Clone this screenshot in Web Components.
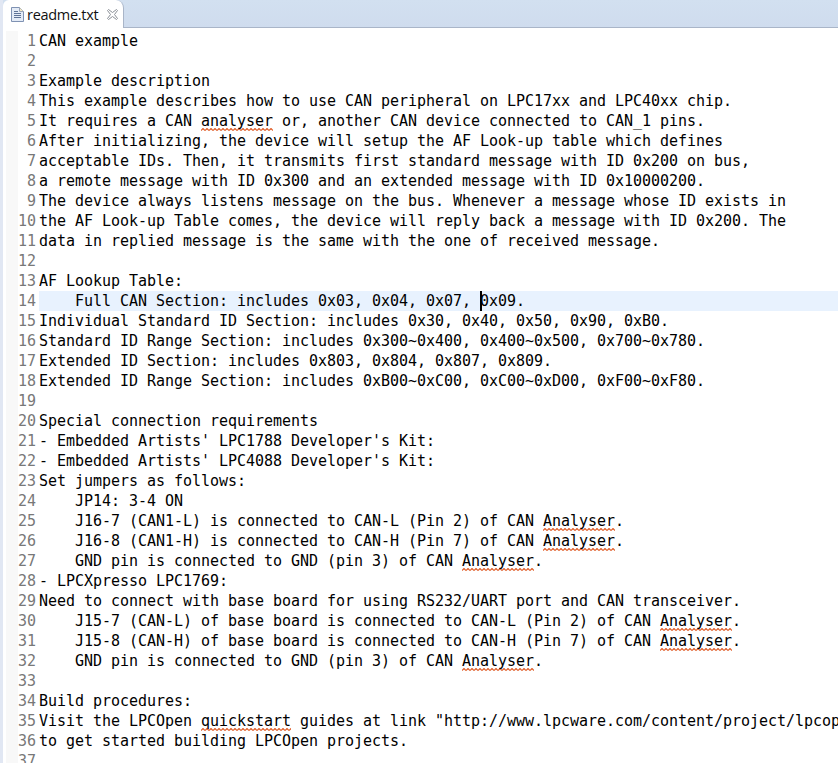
<!DOCTYPE html>
<html>
<head>
<meta charset="utf-8">
<title>readme.txt</title>
<style>
    html, body { margin: 0; height: 100%; background: #fff; overflow: hidden; }
</style>
</head>
<body>
<editor-window></editor-window>

<script>
const README = [
    "CAN example",
    "",
    "Example description",
    "This example describes how to use CAN peripheral on LPC17xx and LPC40xx chip.",
    "It requires a CAN ~analyser~ or, another CAN device connected to CAN_1 pins.",
    "After initializing, the device will setup the AF Look-up table which defines",
    "acceptable IDs. Then, it transmits first standard message with ID 0x200 on bus,",
    "a remote message with ID 0x300 and an extended message with ID 0x10000200.",
    "The device always listens message on the bus. Whenever a message whose ID exists in",
    "the AF Look-up Table comes, the device will reply back a message with ID 0x200. The",
    "data in replied message is the same with the one of received message.",
    "",
    "AF Lookup Table:",
    "    Full CAN Section: includes 0x03, 0x04, 0x07, 0x09.",
    "Individual Standard ID Section: includes 0x30, 0x40, 0x50, 0x90, 0xB0.",
    "Standard ID Range Section: includes 0x300~~0x400, 0x400~~0x500, 0x700~~0x780.",
    "Extended ID Section: includes 0x803, 0x804, 0x807, 0x809.",
    "Extended ID Range Section: includes 0xB00~~0xC00, 0xC00~~0xD00, 0xF00~~0xF80.",
    "",
    "Special connection requirements",
    "- Embedded Artists' LPC1788 Developer's Kit:",
    "- Embedded Artists' LPC4088 Developer's Kit:",
    "Set jumpers as follows:",
    "    JP14: 3-4 ON",
    "    J16-7 (CAN1-L) is connected to CAN-L (Pin 2) of CAN ~Analyser~.",
    "    J16-8 (CAN1-H) is connected to CAN-H (Pin 7) of CAN ~Analyser~.",
    "    GND pin is connected to GND (pin 3) of CAN ~Analyser~.",
    "- LPCXpresso LPC1769:",
    "Need to connect with base board for using RS232/UART port and CAN transceiver.",
    "    J15-7 (CAN-L) of base board is connected to CAN-L (Pin 2) of CAN ~Analyser~.",
    "    J15-8 (CAN-H) of base board is connected to CAN-H (Pin 7) of CAN ~Analyser~.",
    "    GND pin is connected to GND (pin 3) of CAN ~Analyser~.",
    "",
    "Build procedures:",
    "Visit the LPCOpen ~quickstart~ guides at link \"http://www.lpcware.com/content/project/lpcop",
    "to get started building LPCOpen projects.",
    ""
];

// orange squiggle under misspelled words
const SQUIGGLE = "url(\"data:image/svg+xml,%3Csvg xmlns='http://www.w3.org/2000/svg' width='4' height='3'%3E%3Cpath d='M0 2.5L2 .5L4 2.5' fill='none' stroke='%23e0602c' stroke-width='1.2'/%3E%3C/svg%3E\")";

class TabStrip extends HTMLElement {
    constructor() {
        super();
        const shadow = this.attachShadow({ mode: "open" });
        shadow.innerHTML = `
            <style>
                :host {
                    display: flex;
                    flex: none;
                    height: 27px;
                    background: linear-gradient(#d2e0f0, #cfdcee);
                    border-bottom: 1px solid #a9b5c8;
                    font: 14.5px "Open Sans", "Liberation Sans", sans-serif;
                    color: #111;
                }
                .tab {
                    display: flex;
                    align-items: center;
                    width: 121px;
                    height: 28px;
                    box-sizing: border-box;
                    padding-left: 8px;
                    background: #fff;
                    border-right: 1px solid #a9b5c8;
                    border-top-right-radius: 8px;
                    border-top-left-radius: 6px;
                }
                svg { flex: none; }
                .label { margin-left: 3px; letter-spacing: -.3px; }
                .close { margin-left: 9px; }
            </style>
            <div class="tab">
                <svg width="13" height="15" viewBox="0 0 13 15">
                    <path d="M.5 .5H8.5L12.5 4.5V14.5H.5Z" fill="#e4ebf6" stroke="#7f92b3"/>
                    <path d="M8.5 .5V4.5H12.5" fill="#f6e9c4" stroke="#9aa5b8"/>
                    <path d="M3 4.5H7M3 6.5H10M3 8.5H10M3 10.5H10" stroke="#5f7396"/>
                </svg>
                <span class="label"><slot></slot></span>
                <svg class="close" width="11" height="11" viewBox="0 0 11 11">
                    <path d="M1.5 .5L5.5 3.5L9.5 .5L10.5 1.5L7.5 5.5L10.5 9.5L9.5 10.5L5.5 7.5L1.5 10.5L.5 9.5L3.5 5.5L.5 1.5Z" fill="#fff" stroke="#8a8f96"/>
                </svg>
            </div>
        `;
    }
}

class CodeLine extends HTMLElement {
    constructor() {
        super();
        const shadow = this.attachShadow({ mode: "open" });
        shadow.innerHTML = `
            <style>
                :host {
                    display: flex;
                    height: 20px;
                    line-height: 20px;
                }
                .ruler {
                    flex: none;
                    width: 12px;
                    background: #f8f8f8;
                }
                .num {
                    flex: none;
                    width: 18px;
                    text-align: right;
                    color: #787878;
                    letter-spacing: 0;
                }
                .text {
                    flex: 1;
                    min-width: 0;
                    margin-left: 3px;
                    white-space: pre;
                    overflow: hidden;
                    position: relative;
                }
                :host([current]) .text { background: #e8f2fe; }
                .caret {
                    position: absolute;
                    top: 0;
                    width: 1.5px;
                    height: 20px;
                    background: #000;
                }
            </style>
            <span class="ruler"></span>
            <span class="num"></span>
            <span class="text"><slot></slot></span>
        `;
    }

    connectedCallback() {
        const shadow = this.shadowRoot;
        shadow.querySelector(".num").textContent = this.getAttribute("n");
        if (this.hasAttribute("caret") && !shadow.querySelector(".caret")) {
            const caret = document.createElement("span");
            caret.className = "caret";
            caret.style.left = this.getAttribute("caret") + "px";
            shadow.querySelector(".text").appendChild(caret);
        }
    }
}

class TextEditor extends HTMLElement {
    constructor() {
        super();
        const shadow = this.attachShadow({ mode: "open" });
        shadow.innerHTML = `
            <style>
                :host {
                    display: block;
                    flex: 1;
                    min-height: 0;
                    overflow: hidden;
                    padding: 3px 0 0 3px;
                    background: #fff;
                    font: 15px "DejaVu Sans Mono", monospace;
                    letter-spacing: -.03px;
                    color: #000;
                }
            </style>
            <slot></slot>
        `;
        README.forEach((text, i) => {
            const line = document.createElement("code-line");
            line.setAttribute("n", i + 1);
            if (i === 13) {
                line.setAttribute("current", "");
                line.setAttribute("caret", "441");
            }
            // ~word~ marks a spelling error, ~~ is a real tilde
            text.split(/(?<!~)~(?!~)/).forEach((part, j) => {
                const value = part.replace(/~~/g, "~");
                if (j % 2) {
                    const bad = document.createElement("span");
                    bad.textContent = value;
                    bad.style.cssText = `background: ${SQUIGGLE} repeat-x left bottom; padding-bottom: 1px;`;
                    line.appendChild(bad);
                } else {
                    line.appendChild(document.createTextNode(value));
                }
            });
            this.appendChild(line);
        });
    }
}

class EditorWindow extends HTMLElement {
    constructor() {
        super();
        const shadow = this.attachShadow({ mode: "open" });
        shadow.innerHTML = `
            <style>
                :host {
                    display: flex;
                    flex-direction: column;
                    height: 100vh;
                    box-sizing: border-box;
                    border-left: 3px solid #e1e7f3;
                    background: #fff;
                }
            </style>
            <tab-strip>readme.txt</tab-strip>
            <text-editor></text-editor>
        `;
    }
}

customElements.define("tab-strip", TabStrip);
customElements.define("code-line", CodeLine);
customElements.define("text-editor", TextEditor);
customElements.define("editor-window", EditorWindow);
</script>
</body>
</html>
